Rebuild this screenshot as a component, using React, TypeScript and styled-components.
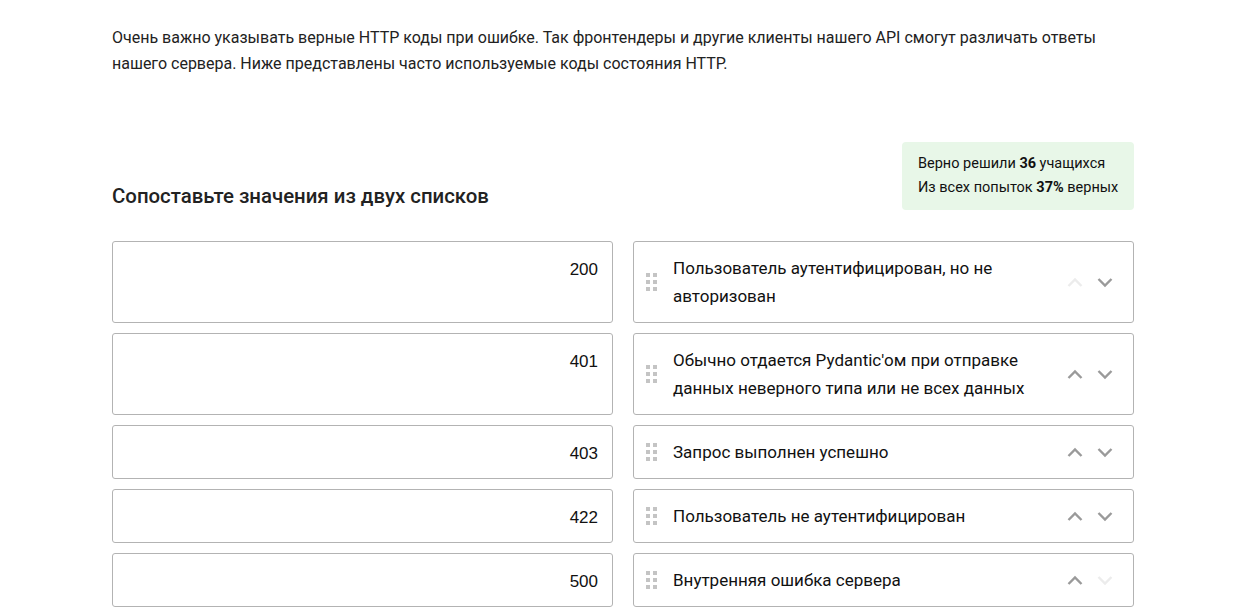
import React from "react";
import styled, { createGlobalStyle } from "styled-components";

const Global = createGlobalStyle`
  html, body { margin: 0; padding: 0; background: #fff; }
  body { font-family: Roboto, "Noto Sans", sans-serif; color: #222; }
`;

const Page = styled.div`
  width: 1022px;
  margin-left: 112px;
  padding-top: 25px;
`;

const Intro = styled.p`
  margin: 0;
  font-size: 16px;
  line-height: 26px;
  color: #222;
`;

const Header = styled.div`
  display: flex;
  align-items: flex-end;
  justify-content: space-between;
  margin-top: 65px;
  margin-bottom: 31px;
`;

const Title = styled.h2`
  margin: 0 0 2px;
  font-size: 20.4px;
  font-weight: 500;
  color: #222;
  line-height: 24px;
`;

const Stats = styled.div`
  box-sizing: border-box;
  width: 232px;
  background: #e8f7e8;
  border-radius: 4px;
  padding: 10px 8px 10px 16px;
  white-space: nowrap;
  font-size: 14.5px;
  line-height: 24px;
  color: #111;
  b { font-weight: 700; }
`;

const Grid = styled.div`
  display: grid;
  grid-template-columns: 1fr 1fr;
  column-gap: 20px;
  row-gap: 10px;
`;

const Card = styled.div`
  border: 1px solid #b3b3b3;
  border-radius: 3px;
  background: #fff;
  box-sizing: border-box;
  min-height: 54px;
  font-size: 17px;
  line-height: 28px;
`;

const KeyCard = styled(Card)`
  padding: 14px 14px 10px;
  text-align: right;
  font-family: "Liberation Sans", Arial, sans-serif;
  color: #111;
`;

const ValueCard = styled(Card)`
  display: flex;
  align-items: center;
  padding: 12px 20px 12px 12px;
  color: #111;
`;

const Handle = styled.div`
  display: grid;
  grid-template-columns: 4px 4px;
  grid-auto-rows: 4px;
  gap: 3px 3px;
  margin-right: 16px;
  span { background: #c4c4c4; display: block; }
`;

const ValueText = styled.div`
  flex: 1;
  max-width: 370px;
`;

const Arrows = styled.div`
  display: flex;
  gap: 14px;
  align-items: center;
  margin-left: auto;
`;

const Chevron = ({ up, dim }: { up?: boolean; dim?: boolean }) => (
  <svg width="16" height="11" viewBox="0 0 16 11">
    <path
      d={up ? "M1.5 9 L8 2.5 L14.5 9" : "M1.5 2 L8 8.5 L14.5 2"}
      fill="none"
      stroke={dim ? "#ececec" : "#9a9a9a"}
      strokeWidth="2.4"
    />
  </svg>
);

const rows = [
  { key: "200", value: "Пользователь аутентифицирован, но не авторизован", up: false, down: true },
  { key: "401", value: "Обычно отдается Pydantic'ом при отправке данных неверного типа или не всех данных", up: true, down: true },
  { key: "403", value: "Запрос выполнен успешно", up: true, down: true },
  { key: "422", value: "Пользователь не аутентифицирован", up: true, down: true },
  { key: "500", value: "Внутренняя ошибка сервера", up: true, down: false },
];

export default function App() {
  return (
    <>
      <Global />
      <Page>
        <Intro>
          Очень важно указывать верные HTTP коды при ошибке. Так фронтендеры и другие клиенты нашего API смогут различать ответы нашего сервера. Ниже представлены часто используемые коды состояния HTTP.
        </Intro>
        <Header>
          <Title>Сопоставьте значения из двух списков</Title>
          <Stats>
            <div>Верно решили <b>36</b> учащихся</div>
            <div>Из всех попыток <b>37%</b> верных</div>
          </Stats>
        </Header>
        <Grid>
          {rows.map((r) => (
            <React.Fragment key={r.key}>
              <KeyCard>{r.key}</KeyCard>
              <ValueCard>
                <Handle>
                  <span /><span /><span /><span /><span /><span />
                </Handle>
                <ValueText>{r.value}</ValueText>
                <Arrows>
                  <Chevron up dim={!r.up} />
                  <Chevron dim={!r.down} />
                </Arrows>
              </ValueCard>
            </React.Fragment>
          ))}
        </Grid>
      </Page>
    </>
  );
}
